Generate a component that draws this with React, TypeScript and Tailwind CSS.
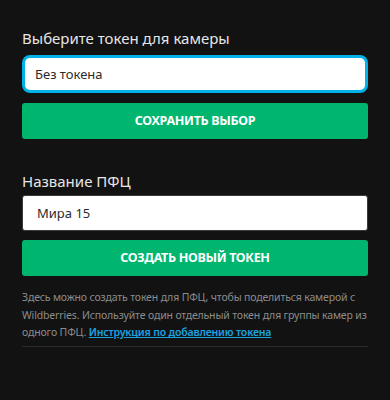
import { useState } from "react";

export default function App() {
  const [token, setToken] = useState("Без токена");
  const [name, setName] = useState("Мира 15");

  return (
    <div className="min-h-[400px] w-full bg-[#121212] px-[22px] pt-[28px] font-['Noto_Sans',sans-serif]">
      <p className="text-[15px] leading-[20px] text-[#e6e6e6]">Выберите токен для камеры</p>
      <div className="mt-[7px] rounded-[8px] bg-[#00b2e8] p-[3px]">
        <input
          value={token}
          onChange={e => setToken(e.target.value)}
          className="block h-[32px] w-full rounded-[5px] bg-white px-[10px] text-[13px] text-[#2b2b2b] outline-none"
        />
      </div>
      <button className="mt-[10px] flex h-[36px] w-full items-center justify-center rounded-[3px] bg-[#00b66f] text-[12.5px] font-bold uppercase tracking-[-0.3px] text-white">
        Сохранить выбор
      </button>

      <p className="mt-[32px] text-[15px] leading-[20px] text-[#e6e6e6]">Название ПФЦ</p>
      <input
        value={name}
        onChange={e => setName(e.target.value)}
        className="mt-[4px] block h-[36px] w-full rounded-[3px] border border-[#3a3a3a] bg-white px-[14px] text-[13px] text-[#2b2b2b] outline-none"
      />
      <button className="mt-[9px] flex h-[36px] w-full items-center justify-center rounded-[3px] bg-[#00b66f] text-[12.5px] font-bold uppercase tracking-[-0.3px] text-white">
        Создать новый токен
      </button>

      <p className="mt-[13px] text-[10.5px] leading-[17.5px] tracking-[-0.15px] text-[#8c8c8c]">
        Здесь можно создать токен для ПФЦ, чтобы поделиться камерой с Wildberries. Используйте один отдельный токен для группы камер из одного ПФЦ.{" "}
        <a href="#" className="font-semibold text-[#1aa3e0] underline">Инструкция по добавлению токена</a>
      </p>
      <div className="mt-[4px] h-px w-full bg-[#2a2a2a]" />
    </div>
  );
}
